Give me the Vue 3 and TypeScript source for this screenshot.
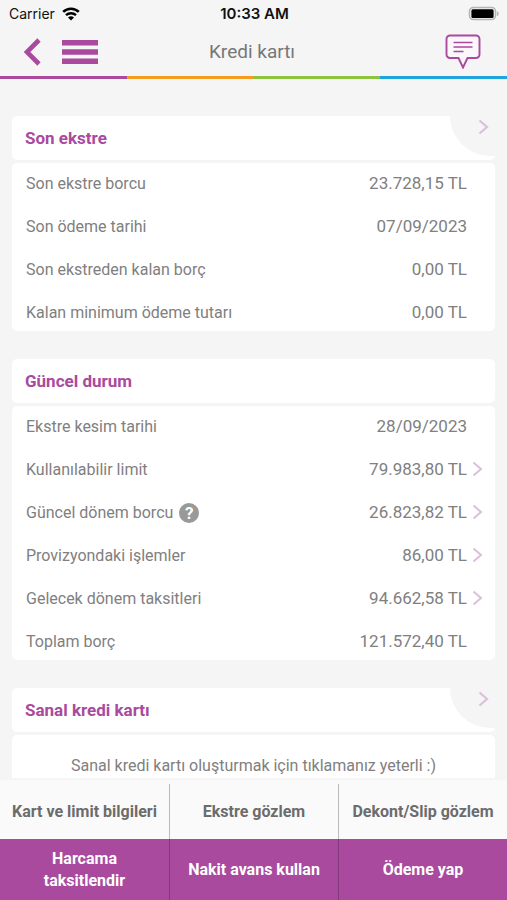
<script setup lang="ts">
interface Row {
  label: string
  value: string
  link?: boolean
  help?: boolean
}

interface Card {
  title: string
  link: boolean
  rows: Row[]
  note?: string
}

const cards: Card[] = [
  {
    title: 'Son ekstre',
    link: true,
    rows: [
      { label: 'Son ekstre borcu', value: '23.728,15 TL' },
      { label: 'Son ödeme tarihi', value: '07/09/2023' },
      { label: 'Son ekstreden kalan borç', value: '0,00 TL' },
      { label: 'Kalan minimum ödeme tutarı', value: '0,00 TL' },
    ],
  },
  {
    title: 'Güncel durum',
    link: false,
    rows: [
      { label: 'Ekstre kesim tarihi', value: '28/09/2023' },
      { label: 'Kullanılabilir limit', value: '79.983,80 TL', link: true },
      { label: 'Güncel dönem borcu', value: '26.823,82 TL', link: true, help: true },
      { label: 'Provizyondaki işlemler', value: '86,00 TL', link: true },
      { label: 'Gelecek dönem taksitleri', value: '94.662,58 TL', link: true },
      { label: 'Toplam borç', value: '121.572,40 TL' },
    ],
  },
  {
    title: 'Sanal kredi kartı',
    link: true,
    rows: [],
    note: 'Sanal kredi kartı oluşturmak için tıklamanız yeterli :)',
  },
]

const secondary: string[] = ['Kart ve limit bilgileri', 'Ekstre gözlem', 'Dekont/Slip gözlem']
const primary: string[] = ['Harcama taksitlendir', 'Nakit avans kullan', 'Ödeme yap']
</script>

<template>
  <div class="screen">
    <div class="status">
      <div class="carrier">
        <span>Carrier</span>
        <svg width="18" height="14" viewBox="0 0 18 14" aria-hidden="true">
          <path d="M1.2 4.9a11.2 11.2 0 0 1 15.6 0" fill="none" stroke="#000" stroke-width="2.6" />
          <path d="M4 8.2a7.2 7.2 0 0 1 10 0" fill="none" stroke="#000" stroke-width="2.4" />
          <path d="M9 13.6 6 10.6a4.3 4.3 0 0 1 6 0z" fill="#000" />
        </svg>
      </div>
      <time>10:33 AM</time>
      <svg class="battery" width="32" height="16" viewBox="0 0 32 16" aria-hidden="true">
        <rect x="1.5" y="1.5" width="26" height="12" rx="4" fill="#f5f5f5" stroke="#b5b5b5" stroke-width="1.6" />
        <rect x="3.4" y="3.2" width="22.2" height="8.8" rx="1.5" fill="#000" />
        <path d="M29 5.2c2.3.8 2.3 4 0 4.8z" fill="#b5b5b5" />
      </svg>
    </div>

    <header class="nav">
      <div class="nav-left">
        <button type="button" aria-label="Geri">
          <svg width="18" height="28" viewBox="0 0 18 28"><path d="M16 2 4 14l12 12" fill="none" stroke="#a94a9f" stroke-width="4.6" /></svg>
        </button>
        <button type="button" aria-label="Menü">
          <svg width="36" height="24" viewBox="0 0 36 24" fill="#a94a9f"><path d="M0 0h36v5.4H0zM0 9.3h36v5.4H0zM0 18.6h36V24H0z" /></svg>
        </button>
      </div>
      <h1>Kredi kartı</h1>
      <button type="button" class="chat" aria-label="Mesajlar">
        <svg width="36" height="35" viewBox="0 0 36 35" fill="none" stroke="#a94a9f">
          <path d="M5 1.5h26A3.5 3.5 0 0 1 34.5 5v15.500a3.500 3.500 0 0 1-3.500 3.500h-8.500L18 33.500 13.500 24H5a3.500 3.500 0 0 1-3.500-3.500V5A3.500 3.500 0 0 1 5 1.500z" fill="#fbf7fb" stroke-width="1.900" />
          <path d="M8.500 8.500h19M8.500 13h19M8.500 17.500h10" stroke-width="1.700" />
        </svg>
      </button>
    </header>
    <div class="stripe"><i></i><i></i><i></i><i></i></div>

    <main>
      <section v-for="card in cards" :key="card.title" class="card">
        <div class="card-head">
          <h2>{{ card.title }}</h2>
          <a v-if="card.link" href="#" class="corner" :aria-label="card.title">
            <svg width="11" height="16" viewBox="0 0 11 16"><path d="M1.5 1.5 9 8l-7.5 6.5" fill="none" stroke="#dcbfdb" stroke-width="2.2" /></svg>
          </a>
        </div>
        <div class="card-body">
          <dl v-if="card.rows.length">
            <div v-for="row in card.rows" :key="row.label" class="row">
              <dt>
                {{ row.label }}
                <button v-if="row.help" type="button" class="help" aria-label="Bilgi">?</button>
              </dt>
              <dd>
                {{ row.value }}
                <a v-if="row.link" href="#" class="more" :aria-label="row.label">
                  <svg width="11" height="16" viewBox="0 0 11 16"><path d="M1.5 1.5 9 8l-7.5 6.5" fill="none" stroke="#dcbfdb" stroke-width="2" /></svg>
                </a>
              </dd>
            </div>
          </dl>
          <p v-if="card.note">{{ card.note }}</p>
        </div>
      </section>
    </main>

    <footer>
      <div class="actions light">
        <button v-for="label in secondary" :key="label" type="button">{{ label }}</button>
      </div>
      <div class="actions solid">
        <button v-for="label in primary" :key="label" type="button">{{ label }}</button>
      </div>
    </footer>
  </div>
</template>

<style>
body {
  margin: 0;
  background: #f5f5f5;
}
</style>

<style scoped>
* {
  box-sizing: border-box;
}
.screen {
  height: 100vh;
  display: flex;
  flex-direction: column;
  background: #f5f5f5;
  color: #808080;
  font-family: Roboto, "Liberation Sans", sans-serif;
  font-size: 16px;
  overflow: hidden;
}
button {
  font: inherit;
  color: inherit;
  border: 0;
  margin: 0;
  padding: 0;
  background: none;
  cursor: pointer;
}
svg {
  display: block;
}
.status {
  flex: none;
  display: grid;
  grid-template-columns: 1fr auto 1fr;
  align-items: center;
  height: 27px;
  padding: 0 7px 0 9px;
  color: #111;
  font-family: Inter, sans-serif;
  font-size: 14px;
}
.carrier {
  display: flex;
  align-items: center;
  gap: 7px;
}
time {
  font-size: 15px;
  font-weight: 600;
}
.battery {
  justify-self: end;
}
.nav {
  flex: none;
  display: grid;
  grid-template-columns: 1fr auto 1fr;
  align-items: center;
  height: 49px;
  padding: 0 26px 0 23px;
}
.nav-left {
  display: flex;
  align-items: center;
  gap: 21px;
}
.chat {
  justify-self: end;
}
h1 {
  margin: 0;
  font-size: 19px;
  font-weight: 400;
  color: #777;
}
.stripe {
  flex: none;
  display: grid;
  grid-template-columns: repeat(4, 1fr);
  height: 3px;
}
.stripe i:nth-child(1) { background: #a94a9f; }
.stripe i:nth-child(2) { background: #f39c1f; }
.stripe i:nth-child(3) { background: #8cc43f; }
.stripe i:nth-child(4) { background: #1fa4dc; }
main {
  flex: 1;
  min-height: 0;
  overflow: hidden;
  display: flex;
  flex-direction: column;
  gap: 28px;
  padding: 37px 12px 0;
}
.card {
  flex: none;
  display: flex;
  flex-direction: column;
  gap: 3px;
}
.card-head,
.card-body {
  background: #fff;
  border-radius: 5px;
}
.card-head {
  position: relative;
  display: flex;
  align-items: center;
  height: 44px;
  padding: 0 13px;
  overflow: hidden;
}
h2 {
  margin: 0;
  font-size: 17px;
  line-height: 20px;
  font-weight: 700;
  color: #a94a9f;
}
.corner {
  position: absolute;
  top: 0;
  right: 0;
  width: 45px;
  height: 40px;
  padding: 3px 0 0 28px;
  background: #f5f5f5;
  border-bottom-left-radius: 40px;
}
dl {
  margin: 0;
  padding: 10px 28px 9px 14px;
  display: flex;
  flex-direction: column;
  gap: 23px;
}
.row {
  display: flex;
  justify-content: space-between;
  height: 20px;
  line-height: 20px;
  align-items: baseline;
}
dt {
  display: flex;
  align-items: center;
  gap: 6px;
}
dd {
  position: relative;
  margin: 0;
  font-size: 17px;
}
.more {
  position: absolute;
  top: 2px;
  left: 100%;
  margin-left: 5px;
}
.help {
  width: 20px;
  height: 20px;
  border-radius: 50%;
  background: #999;
  color: #fff;
  font-size: 17px;
  font-weight: 700;
  line-height: 20px;
}
p {
  margin: 0;
  padding: 21px 14px;
  line-height: 20px;
  text-align: center;
}
footer {
  flex: none;
  margin-top: 2px;
  background: #fafafa;
  font-weight: 700;
}
.actions {
  display: grid;
  grid-template-columns: repeat(3, 1fr);
}
.actions button + button {
  border-left: 1px solid #bbb;
}
.light {
  height: 59px;
  padding-top: 4px;
  color: #6c6c6c;
}
.solid {
  height: 61px;
  background: #a94a9f;
  color: #fff;
  line-height: 22px;
}
.solid button {
  padding: 0 16px;
}
.solid button + button {
  border-left-color: #833a7d;
}
</style>
